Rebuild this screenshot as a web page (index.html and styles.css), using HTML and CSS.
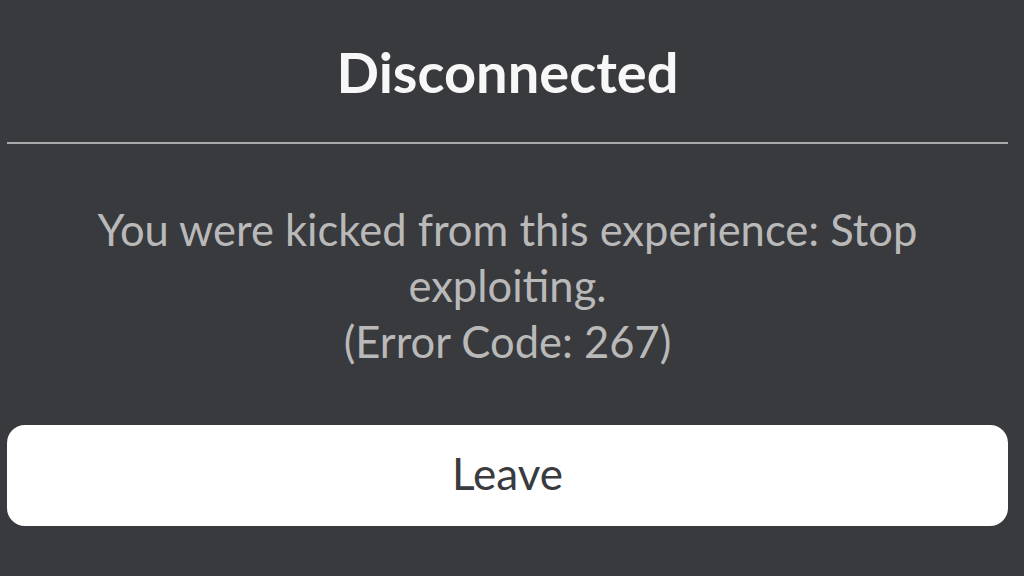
FILE: index.html
```html
<!DOCTYPE html>
<html lang="en">
<head>
    <meta charset="UTF-8">
    <meta name="viewport" content="width=device-width, initial-scale=1.0">
    <title>Disconnected</title>
    <link rel="stylesheet" href="styles.css">
</head>
<body>
    <div class="prompt">
        <h1 class="prompt-title">Disconnected</h1>
        <div class="prompt-divider"></div>
        <p class="prompt-message">
            You were kicked from this experience: Stop exploiting.
            <span class="error-code">(Error Code: 267)</span>
        </p>
        <button class="leave-button">Leave</button>
    </div>
</body>
</html>
```

FILE: styles.css
```css
* {
    margin: 0;
    padding: 0;
    box-sizing: border-box;
}
body {
    font-family: Lato, "Open Sans", sans-serif;
    background-color: #393a3e;
    color: white;
    overflow: hidden;
}
.prompt {
    display: flex;
    flex-direction: column;
    align-items: center;
    padding: 42px 16px 0 7px;
}
.prompt-title {
    font-size: 56px;
    font-weight: 700;
    line-height: 60px;
    color: #f7f7f7;
}
.prompt-divider {
    width: 100%;
    height: 2px;
    margin-top: 40px;
    background: #a9a9ab;
}
.prompt-message {
    max-width: 880px;
    margin-top: 57px;
    font-size: 43.5px;
    line-height: 56px;
    color: #b9b9ba;
    text-align: center;
}
.error-code {
    display: block;
}
.leave-button {
    width: 100%;
    height: 101px;
    margin-top: 56px;
    padding-bottom: 5px;
    border: none;
    border-radius: 18px;
    background: #ffffff;
    color: #3a3b3e;
    font-family: Lato, "Open Sans", sans-serif;
    font-size: 44px;
    cursor: pointer;
}
```
